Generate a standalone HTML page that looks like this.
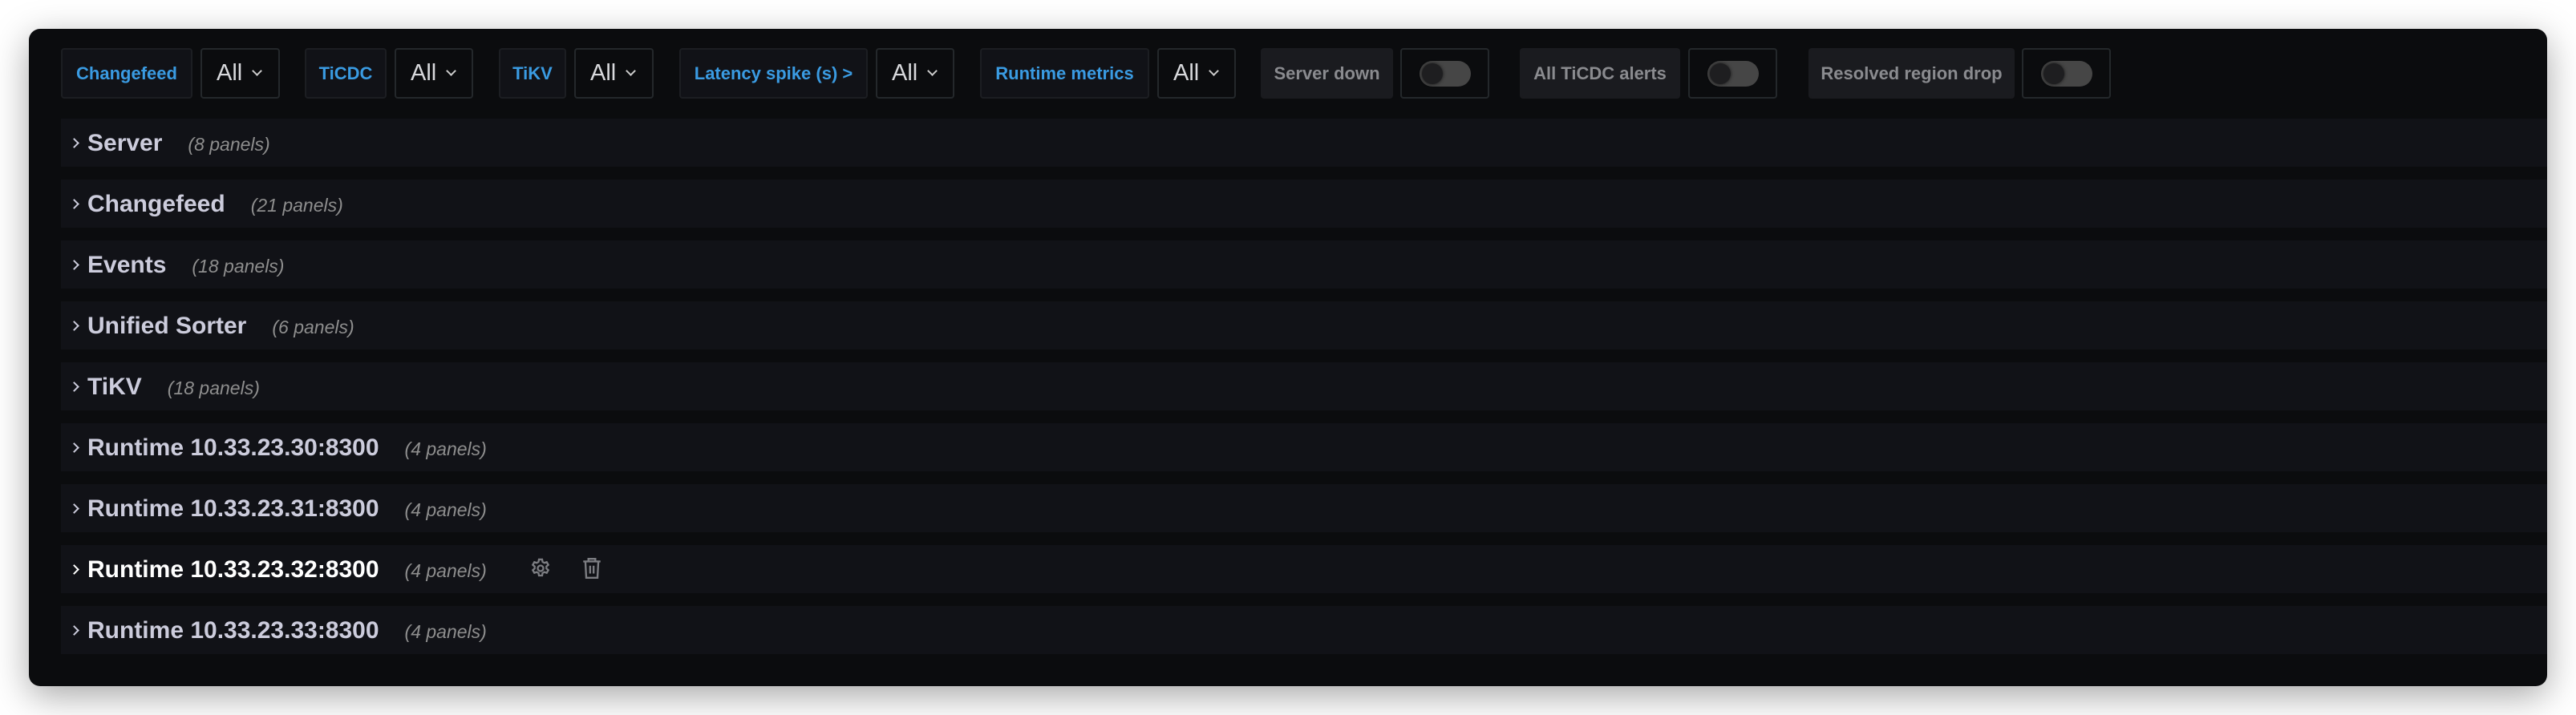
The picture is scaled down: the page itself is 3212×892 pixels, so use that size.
<!DOCTYPE html>
<html><head><meta charset="utf-8"><style>
*{margin:0;padding:0;box-sizing:border-box}
body{width:3212px;height:892px;background:#fff;position:relative;overflow:hidden;font-family:"Liberation Sans",sans-serif}
#win{position:absolute;left:36px;top:36px;width:3140px;height:820px;background:#0b0c0e;border-radius:14px;box-shadow:0 12px 45px rgba(0,0,0,.35)}
.a{position:absolute}
.lbl{position:absolute;top:60px;height:63px;background:#111217;border:2px solid #1c1e22;border-radius:4px;color:#3a9be2;font-size:22px;font-weight:bold;display:flex;align-items:center;justify-content:center;white-space:nowrap}
.lbl.g{background:#1a1b1f;border-color:#1a1b1f;color:#8a8b8f}
.sel{position:absolute;top:60px;height:63px;background:#0b0c0e;border:2px solid #24282b;border-radius:4px;color:#d8d9dc;font-size:29px;display:flex;align-items:center;padding-left:18px}
.sel i{font-style:normal;display:inline-block;width:9px;height:9px;border-right:2px solid #ccc;border-bottom:2px solid #ccc;transform:rotate(45deg);margin-left:14px;margin-top:-6px}
.tg{position:absolute;top:60px;height:63px;width:111px;background:#0b0c0e;border:2px solid #24282b;border-radius:4px}
.tg b{position:absolute;left:22px;top:14px;width:64px;height:32px;border-radius:16px;background:#464646}
.tg b:after{content:"";position:absolute;left:3px;top:3px;width:26px;height:26px;border-radius:50%;background:#1e1e20;box-shadow:0 0 4px rgba(0,0,0,.7)}
.row{position:absolute;left:76px;width:3100px;height:60px;background:#111217}
.row .c{position:absolute;left:12px;top:26px;width:9px;height:9px;border-right:2px solid #ccccdc;border-top:2px solid #ccccdc;transform:rotate(45deg)}
.row .t{position:absolute;left:33px;top:1px;line-height:60px;font-size:30px;font-weight:bold;color:#ccccdc;white-space:nowrap}
.row .t span{font-weight:normal;font-style:italic;font-size:23px;color:#8e8e8e;margin-left:32px}
</style></head><body>
<div id="win"></div>
<div class="lbl" style="left:76px;width:164px">Changefeed</div>
<div class="sel" style="left:250px;width:99px">All<i></i></div>
<div class="lbl" style="left:380px;width:102px">TiCDC</div>
<div class="sel" style="left:492px;width:98px">All<i></i></div>
<div class="lbl" style="left:622px;width:84px">TiKV</div>
<div class="sel" style="left:716px;width:99px">All<i></i></div>
<div class="lbl" style="left:847px;width:235px">Latency spike (s) &gt;</div>
<div class="sel" style="left:1092px;width:98px">All<i></i></div>
<div class="lbl" style="left:1222px;width:211px">Runtime metrics</div>
<div class="sel" style="left:1443px;width:98px">All<i></i></div>
<div class="lbl g" style="left:1572px;width:165px">Server down</div>
<div class="tg" style="left:1746px"><b></b></div>
<div class="lbl g" style="left:1895px;width:200px">All TiCDC alerts</div>
<div class="tg" style="left:2105px"><b></b></div>
<div class="lbl g" style="left:2255px;width:257px">Resolved region drop</div>
<div class="tg" style="left:2521px"><b></b></div>

<div class="row" style="top:148px"><div class="c"></div><div class="t">Server<span>(8 panels)</span></div></div>
<div class="row" style="top:224px"><div class="c"></div><div class="t">Changefeed<span>(21 panels)</span></div></div>
<div class="row" style="top:300px"><div class="c"></div><div class="t">Events<span>(18 panels)</span></div></div>
<div class="row" style="top:376px"><div class="c"></div><div class="t">Unified Sorter<span>(6 panels)</span></div></div>
<div class="row" style="top:452px"><div class="c"></div><div class="t">TiKV<span>(18 panels)</span></div></div>
<div class="row" style="top:528px"><div class="c"></div><div class="t">Runtime 10.33.23.30:8300<span>(4 panels)</span></div></div>
<div class="row" style="top:604px"><div class="c"></div><div class="t">Runtime 10.33.23.31:8300<span>(4 panels)</span></div></div>
<div class="row" style="top:680px"><div class="c" style="border-color:#fff"></div><div class="t" style="color:#fff">Runtime 10.33.23.32:8300<span>(4 panels)</span></div>
<svg class="a" style="left:584px;top:15px" width="28" height="28" viewBox="0 0 24 24" fill="none" stroke="#7c7d82" stroke-width="2"><circle cx="12" cy="12" r="3"/><path d="M10.3 2.5h3.4l.5 2.6 1.9 1.1 2.5-.9 1.7 3-2 1.7v2.2l2 1.7-1.7 3-2.5-.9-1.9 1.1-.5 2.6h-3.4l-.5-2.6-1.9-1.1-2.5.9-1.7-3 2-1.7v-2.2l-2-1.7 1.7-3 2.5.9 1.9-1.1z"/></svg>
<svg class="a" style="left:649px;top:15px" width="26" height="28" viewBox="0 0 24 26" fill="none" stroke="#7c7d82" stroke-width="2.2"><path d="M2 5h20M8 5V2h8v3M4.5 5l1 19h13l1-19M10 10v9M14 10v9"/></svg>
</div>
<div class="row" style="top:756px"><div class="c"></div><div class="t">Runtime 10.33.23.33:8300<span>(4 panels)</span></div></div>
</body></html>
